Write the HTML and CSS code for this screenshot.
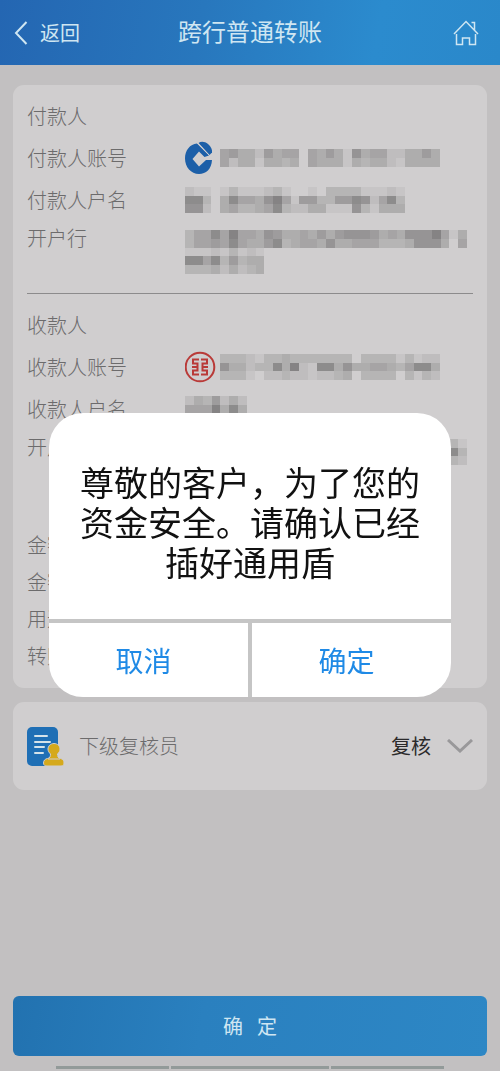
FILE: index.html
```
<!DOCTYPE html>
<html lang="zh-CN">
    <head>
        <meta charset="utf-8">
        <meta name="viewport" content="width=device-width, initial-scale=1">
        <title>跨行普通转账</title>
        <link rel="stylesheet" href="styles.css">
    </head>
    <body>
        <header class="header">
            <a class="back" href="#">
                <svg width="14" height="24" viewBox="0 0 14 24"><path d="M12.500 1L2 12L12.500 23"/></svg>
                <span>返回</span>
            </a>
            <h1>跨行普通转账</h1>
            <a class="home" href="#" aria-label="首页">
                <svg width="26" height="26" viewBox="0 0 26 26"><path d="M1 14L13 1.500L25 14M18.500 2.500H21.500V10M3.500 14V24.500H9.500V18H16.500V24.500H22.500V14"/></svg>
            </a>
        </header>

        <main class="content">
            <section class="card">
                <dl class="group">
                    <div class="row"><dt>付款人</dt></div>
                    <div class="row">
                        <dt>付款人账号</dt>
                        <dd>
                            <svg class="bank" width="31" height="34" viewBox="0 0 31 34">
                                <path class="ccb" fill-rule="evenodd" d="M12 2.500C5 3 0 9.500 0 17.500C0 26 6 33 14 33C21 33 26.500 28 27 19H21L14 25.500L7.500 18L14 10.500L19.500 16L24 14.500Z"/>
                                <path class="ccb" d="M13.500 2C16 0 20 0.500 23 3C26 5.500 27.500 9 27 11.500L24.500 14Z"/>
                                <path class="ccb-line" d="M12.500 2L24.500 14.500"/>
                            </svg>
                            <svg class="mask" data-rows="5644264550546417455224464 5244144340544414344214444"></svg>
                        </dd>
                    </div>
                    <div class="row">
                        <dt>付款人户名</dt>
                        <dd><svg class="mask" data-rows="2110131112310010333311121 8830485547951663366872583 7720453345832244111731444"></svg></dd>
                    </div>
                    <div class="row tall">
                        <dt>开户行</dt>
                        <dd><svg class="mask" data-rows="0 35585955476445464677764547779514 35565854468345547445553334777405 111213121 885836344 333424234"></svg></dd>
                    </div>
                </dl>
                <dl class="group">
                    <div class="row"><dt>收款人</dt></div>
                    <div class="row">
                        <dt>收款人账号</dt>
                        <dd>
                            <svg class="bank" width="31" height="34" viewBox="0 0 31 34">
                                <circle class="icbc" cx="15" cy="17" r="14.300"/>
                                <path class="icbc" d="M14 9.500H8V13.500H12.500V20.500H8V24.500H14M7 17H12.500M16 9.500H22V13.500H17.500V20.500H22V24.500H16M23 17H17.500"/>
                            </svg>
                            <svg class="mask" data-rows="3332133433333330333313122 7442338492188474455435884 3331022322122340333303132"></svg>
                        </dd>
                    </div>
                    <div class="row">
                        <dt>收款人户名</dt>
                        <dd><svg class="mask" data-rows="2436242 5559484 3334233"></svg></dd>
                    </div>
                    <div class="row tall">
                        <dt>开户行</dt>
                        <dd><svg class="mask" data-rows="0 35585955476445464677764547777731 35565854468345547445553334777683 11121312100000000000000000003332"></svg></dd>
                    </div>
                </dl>
                <dl class="extra">
                    <div class="row"><dt>金额</dt></div>
                    <div class="row"><dt>金额大写</dt></div>
                    <div class="row"><dt>用途</dt></div>
                    <div class="row"><dt>转账方式</dt></div>
                </dl>
            </section>

            <section class="card reviewer">
                <svg width="37" height="41" viewBox="0 0 37 41">
                    <rect class="doc" x="0" y="1" width="31" height="39" rx="5"/>
                    <path class="doc-lines" d="M8 10H20M8 16H23M8 21H17M8 27H16"/>
                    <path class="stamp" d="M27 17.500C23.500 17.500 21 20 21 23C21 25 22 26.500 23.500 28C23.500 30.500 23 32 20.500 32.500C18 33 16.500 34.500 16.500 37C16.500 39.500 18.500 40 20 40H34C36 40 37 39 37 37C37 34.500 36 33 33.500 32.500C31 32 30.500 30.500 30.500 28C32 26.500 33 25 33 23C33 20 30.500 17.500 27 17.500Z"/>
                    <path class="stamp-line" d="M21 33H33"/>
                </svg>
                <label for="review">下级复核员</label>
                <select id="review">
                    <option>复核</option>
                </select>
                <svg class="arrow" width="26" height="14" viewBox="0 0 26 14"><path d="M1 1L13 12L25 1"/></svg>
            </section>
        </main>

        <footer class="footer">
            <button class="submit" type="button"><span>确</span><span>定</span></button>
            <div class="navbar"><i></i><i class="wide"></i><i></i></div>
        </footer>

        <div class="overlay">
            <div class="modal" role="dialog" aria-modal="true" aria-labelledby="message">
                <p id="message">尊敬的客户，为了您的资金安全。请确认已经插好通用盾</p>
                <div class="actions">
                    <button type="button">取消</button>
                    <button type="button">确定</button>
                </div>
            </div>
        </div>
        <script src="script.js"></script>
    </body>
</html>
```
FILE: styles.css
```
*{
    box-sizing: border-box;
    padding: 0;
    margin: 0;
}
body {
    display: flex;
    flex-direction: column;
    min-height: 100vh;
    background-color: #c2c0c1;
    color: #6c6b6c;
    font-family: "Noto Sans CJK SC", sans-serif;
    font-size: 20px;
    font-weight: 300;
    line-height: 30px;
}
button, select {
    border: none;
    background: none;
    font: inherit;
    cursor: pointer;
}
svg {
    flex: none;
    fill: none;
}

.header {
    display: grid;
    grid-template-columns: 1fr auto 1fr;
    align-items: center;
    height: 65px;
    padding: 0 14px;
    background: linear-gradient(100deg, #2466b2, #2877bd 40%, #2b8bce 75%, #2a88ca);
    color: #cfe6f2;
}
.header h1 {
    font-size: 24px;
    font-weight: 400;
    line-height: 28px;
    padding-bottom: 4px;
}
.header svg {
    stroke: #cfe6f2;
    stroke-width: 2;
}
.back {
    display: flex;
    align-items: center;
    gap: 12px;
    color: inherit;
    text-decoration: none;
    font-weight: 400;
}
.home {
    display: flex;
    justify-content: flex-end;
    padding-right: 7px;
}
.home svg {
    stroke-width: 1.5;
}

.content {
    flex: 1;
    padding: 20px 13px;
}
.card {
    margin-bottom: 14px;
    padding: 10px 14px 14px;
    border-radius: 11px;
    background-color: #d0cecf;
}
.group + .group {
    margin-top: 20px;
    padding-top: 10px;
    border-top: 1px solid #8c8b8c;
}
.row {
    display: flex;
    align-items: center;
    height: 42px;
}
.row dt {
    width: 158px;
}
.row dd {
    display: flex;
    align-items: center;
    gap: 4px;
}
.row.tall {
    align-items: flex-start;
    height: 52px;
}
.tall dt {
    padding-top: 2px;
}
.extra {
    margin-top: 44px;
}
.extra .row {
    height: 37px;
}
.ccb {
    fill: #1c5fa8;
}
.ccb-line {
    stroke: #d0cecf;
    stroke-width: 1;
}
.icbc {
    stroke: #b93a38;
    stroke-width: 2;
}

.reviewer {
    display: flex;
    align-items: center;
    height: 88px;
    padding: 0 14px;
}
.reviewer label {
    flex: 1;
    padding-left: 15px;
}
.reviewer select {
    appearance: none;
    color: #2b2a2b;
    font-weight: 400;
}
.doc {
    fill: #1f6fb5;
}
.doc-lines {
    stroke: #d5e3ea;
    stroke-width: 2;
    stroke-linecap: round;
}
.stamp {
    fill: #d5a91c;
    stroke: #d0cecf;
    stroke-width: 1;
}
.stamp-line {
    stroke: #d0cecf;
}
.arrow {
    margin-left: 16px;
    stroke: #99989a;
    stroke-width: 3;
}

.footer {
    padding: 0 13px 2px;
}
.submit {
    display: flex;
    align-items: center;
    justify-content: center;
    gap: 14px;
    width: 100%;
    height: 60px;
    border-radius: 6px;
    background: linear-gradient(100deg, #2272b0, #2a80bf 40%, #2d87c5);
    color: #cfe6f2;
    font-weight: 400;
}
.navbar {
    display: flex;
    gap: 2px;
    margin-top: 10px;
    padding: 0 43px;
}
.navbar i {
    flex: 5;
    height: 3px;
    background-color: #929a99;
}
.navbar .wide {
    flex: 7;
}

.overlay {
    position: fixed;
    inset: 0;
    display: flex;
    align-items: center;
    justify-content: center;
    padding-top: 39px;
}
.modal {
    width: 81%;
    max-width: 402px;
    overflow: hidden;
    border-radius: 34px;
    background-color: #fff;
}
.modal p {
    padding: 49px 30px 37px;
    color: #111;
    font-size: 34px;
    font-weight: 400;
    line-height: 40px;
    text-align: center;
}
.actions {
    display: flex;
    border-top: 4px solid #c5c5c5;
}
.actions button {
    flex: 1;
    height: 74px;
    padding-right: 10px;
    color: #1f8ae6;
    font-size: 28px;
    font-weight: 400;
}
.actions button + button {
    border-left: 4px solid #c5c5c5;
}
```
FILE: script.js
```
const SIZE = 9;

// one digit per tile, 0 is empty and 9 is the darkest
document.querySelectorAll(".mask").forEach(svg => {
    const rows = svg.dataset.rows.split(" ");
    const cols = Math.max(...rows.map(r => r.length));
    svg.setAttribute("width", Math.round(cols * 8.8));
    svg.setAttribute("height", Math.round(rows.length * 8.8));
    svg.setAttribute("viewBox", "0 0 " + cols * SIZE + " " + rows.length * SIZE);
    svg.setAttribute("preserveAspectRatio", "none");
    svg.setAttribute("shape-rendering", "crispEdges");
    rows.forEach((row, y) => {
        [...row].forEach((shade, x) => {
            const tile = document.createElementNS("http://www.w3.org/2000/svg", "rect");
            tile.setAttribute("x", x * SIZE);
            tile.setAttribute("y", y * SIZE);
            tile.setAttribute("width", SIZE);
            tile.setAttribute("height", SIZE);
            tile.setAttribute("fill", "rgba(0, 0, 0, " + shade * 0.04 + ")");
            svg.appendChild(tile);
        });
    });
});
```
